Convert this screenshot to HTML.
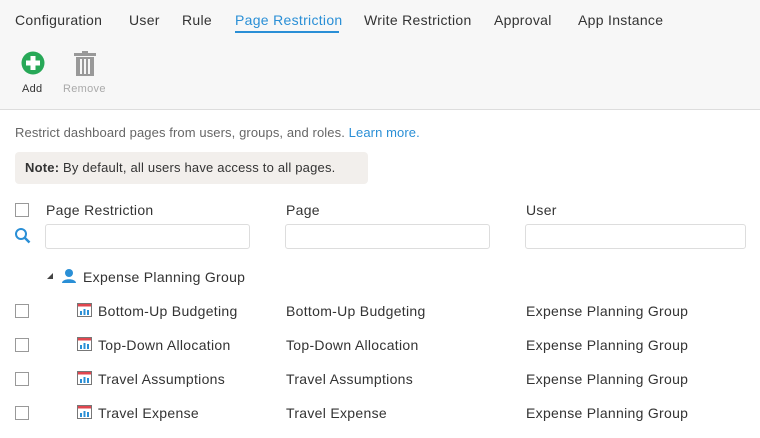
<!DOCTYPE html><html><head><style>
body{margin:0;width:760px;height:438px;overflow:hidden;font-family:"Liberation Sans",sans-serif;color:#333;background:#fff;position:relative;font-size:14px;letter-spacing:0.3px}
.a{position:absolute;white-space:nowrap}
.hdr{position:absolute;left:0;top:0;width:760px;height:109px;background:#f7f7f7;border-bottom:1px solid #ddd}
.cb{position:absolute;width:12px;height:12px;border:1px solid #999;background:#fff}
.in{position:absolute;top:224px;height:23px;border:1px solid #ddd;border-radius:3px;background:#fff}
</style></head><body>
<div class="hdr"></div>
<div class="a" style="left:15px;top:12px">Configuration</div>
<div class="a" style="left:129px;top:12px">User</div>
<div class="a" style="left:182px;top:12px">Rule</div>
<div class="a" style="left:235px;top:12px;color:#2a8fd6">Page Restriction</div>
<div class="a" style="left:235px;top:31px;width:104px;height:2px;background:#2a8fd6"></div>
<div class="a" style="left:364px;top:12px">Write Restriction</div>
<div class="a" style="left:494px;top:12px">Approval</div>
<div class="a" style="left:578px;top:12px">App Instance</div>
<svg class="a" style="left:21px;top:51px" width="24" height="24"><circle cx="12" cy="12" r="11.5" fill="#27a857"/><rect x="5" y="9.5" width="14" height="5" fill="#fff"/><rect x="9.5" y="5" width="5" height="14" fill="#fff"/></svg>
<svg class="a" style="left:73px;top:51px" width="24" height="26"><rect x="1" y="2" width="22" height="3" fill="#999"/><rect x="9" y="0" width="6" height="3" fill="#999"/><path d="M3 6h18v19H3z" fill="#999"/><path d="M8 8v15M12 8v15M16 8v15" stroke="#f7f7f7" stroke-width="2"/></svg>
<div class="a" style="left:22px;top:83px;font-size:11px;color:#333">Add</div>
<div class="a" style="left:63px;top:83px;font-size:11px;color:#aaa">Remove</div>
<div class="a" style="left:15px;top:125px;color:#666;font-size:13px;letter-spacing:0.1px">Restrict dashboard pages from users, groups, and roles. <span style="color:#2a8fd6">Learn more.</span></div>
<div class="a" style="left:15px;top:152px;width:353px;height:32px;background:#f2efec;border-radius:4px"></div>
<div class="a" style="left:25px;top:160px;font-size:13px;letter-spacing:0.2px"><b>Note:</b> By default, all users have access to all pages.</div>
<div class="cb" style="left:15px;top:203px"></div>
<div class="a" style="left:46px;top:202px">Page Restriction</div>
<div class="a" style="left:286px;top:202px">Page</div>
<div class="a" style="left:526px;top:202px">User</div>
<svg class="a" style="left:14px;top:227px" width="18" height="18"><circle cx="7" cy="7" r="5" fill="none" stroke="#2a8fd6" stroke-width="2"/><path d="M10.5 10.5l5 5" stroke="#2a8fd6" stroke-width="2.5"/></svg>
<div class="in" style="left:45px;width:203px"></div>
<div class="in" style="left:285px;width:203px"></div>
<div class="in" style="left:525px;width:219px"></div>
<svg class="a" style="left:46px;top:272px" width="8" height="8"><path d="M7 1v6H1z" fill="#444"/></svg>
<svg class="a" style="left:61px;top:268px" width="16" height="16"><circle cx="8" cy="5" r="4" fill="#2a8fd6"/><path d="M1 15c0-5 14-5 14 0z" fill="#2a8fd6"/></svg>
<div class="a" style="left:83px;top:269px">Expense Planning Group</div>
<div id="rows"></div>
<script>
var n=["Bottom-Up Budgeting","Top-Down Allocation","Travel Assumptions","Travel Expense"],h="";
n.forEach(function(t,i){var y=303+i*34;
h+='<div class="cb" style="left:15px;top:'+(y+1)+'px"></div>'+
'<svg class="a" style="left:77px;top:'+(y)+'px" width="15" height="14"><rect x="0.5" y="0.5" width="14" height="13" fill="#fff" stroke="#777"/><rect x="1" y="1" width="13" height="2.5" fill="#e0464f"/><rect x="3" y="8" width="2" height="4" fill="#2a8fd6"/><rect x="6.5" y="6" width="2" height="6" fill="#2a8fd6"/><rect x="10" y="7" width="2" height="5" fill="#2a8fd6"/></svg>'+
'<div class="a" style="left:98px;top:'+y+'px">'+t+'</div><div class="a" style="left:286px;top:'+y+'px">'+t+'</div><div class="a" style="left:526px;top:'+y+'px">Expense Planning Group</div>';});
document.getElementById("rows").innerHTML=h;
</script>
</body></html>
